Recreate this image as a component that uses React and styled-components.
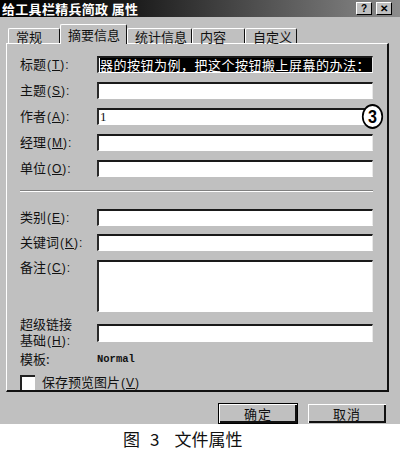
import React from "react";
import styled, { createGlobalStyle } from "styled-components";

const GlobalStyle = createGlobalStyle`
  html, body {
    margin: 0;
    padding: 0;
    background: #fff;
  }
  body {
    width: 400px;
    height: 453px;
    overflow: hidden;
    font-family: "Noto Sans CJK SC", "Liberation Sans", sans-serif;
    color: #111;
  }
`;

const Window = styled.div`
  height: 424px;
  background: #c0c0c0;
  display: flex;
  flex-direction: column;
`;

const TitleBar = styled.div`
  height: 17px;
  flex-shrink: 0;
  display: flex;
  align-items: center;
  justify-content: space-between;
  padding: 0 8px 0 2px;
  background: linear-gradient(to right, #000 0%, #1e1e1e 35%, #8c8c8c 100%);
`;

const TitleText = styled.span`
  color: #fff;
  font-size: 13px;
  font-weight: bold;
  line-height: 17px;
  letter-spacing: 0.3px;
`;

const TitleButtons = styled.div`
  display: flex;
  gap: 4px;
`;

const CapButton = styled.div`
  width: 16px;
  height: 13px;
  box-sizing: border-box;
  background: #c0c0c0;
  border-top: 1px solid #fff;
  border-left: 1px solid #fff;
  border-right: 1px solid #000;
  border-bottom: 1px solid #000;
  display: flex;
  align-items: center;
  justify-content: center;
  font: bold 10px "Liberation Sans", sans-serif;
  color: #000;
`;

const Body = styled.div`
  padding: 5px 11px 0 6px;
  display: flex;
  flex-direction: column;
`;

const Tabs = styled.div`
  height: 21px;
  display: flex;
  align-items: flex-end;
  padding-left: 2px;
`;

const Tab = styled.div`
  width: ${(p) => p.$w}px;
  height: ${(p) => (p.$active ? 20 : 15)}px;
  box-sizing: border-box;
  margin-bottom: ${(p) => (p.$active ? -1 : 0)}px;
  padding: ${(p) => (p.$active ? 3 : 1)}px 0 0 7px;
  background: #c0c0c0;
  border-top: 1px solid #fff;
  border-left: 1px solid #fff;
  border-right: 1px solid #111;
  border-radius: 2px 2px 0 0;
  font-size: 13px;
  line-height: 13px;
  white-space: nowrap;
  position: relative;
  z-index: ${(p) => (p.$active ? 1 : 0)};
`;

const Panel = styled.div`
  height: 349px;
  box-sizing: border-box;
  border-top: 1px solid #fff;
  border-left: 1px solid #fff;
  border-right: 2px solid #111;
  border-bottom: 2px solid #111;
  padding: 12px 14px 0 13px;
  display: flex;
  flex-direction: column;
`;

const Row = styled.div`
  display: flex;
  align-items: ${(p) => (p.$top ? "flex-start" : "center")};
  margin-top: ${(p) => p.$mt || 0}px;
`;

const Label = styled.div`
  width: 77px;
  flex-shrink: 0;
  font-size: 13px;
  line-height: ${(p) => (p.$multi ? 16 : 13)}px;
  white-space: nowrap;
`;

const Key = styled.span`
  font-family: "Liberation Sans", sans-serif;
  font-size: 12px;
  letter-spacing: 1px;
  margin-left: 1px;
`;

const U = styled.span`
  text-decoration: underline;
`;

const Input = styled.div`
  flex: 1;
  height: ${(p) => p.$h || 17}px;
  box-sizing: border-box;
  background: #fff;
  border-top: 2px solid #1a1a1a;
  border-left: 2px solid #2a2a2a;
  border-right: 1px solid #e8e8e8;
  border-bottom: 1px solid #fff;
  padding-left: 1px;
  display: flex;
  align-items: center;
  position: relative;
  font-size: 13px;
  line-height: 14px;
  white-space: nowrap;
`;

const Selected = styled.span`
  background: #000;
  color: #fff;
  letter-spacing: 0.5px;
  padding-right: 2px;
`;

const Plain = styled.span`
  font-family: "Liberation Serif", serif;
  font-size: 13px;
`;

const Badge = styled.div`
  position: absolute;
  right: -13px;
  top: -6px;
  width: 25px;
  height: 25px;
  box-sizing: border-box;
  border: 2px solid #000;
  border-radius: 50%;
  background: #fff;
  display: flex;
  align-items: center;
  justify-content: center;
  font: bold 19px "Liberation Sans", sans-serif;
  color: #000;
  transform: scaleX(0.85);
`;

const Separator = styled.div`
  height: 2px;
  box-sizing: border-box;
  border-top: 1px solid #808080;
  border-bottom: 1px solid #fff;
  margin-top: ${(p) => p.$mt || 0}px;
`;

const Value = styled.span`
  font: bold 10.5px "Liberation Mono", monospace;
`;

const CheckBox = styled.div`
  width: 15px;
  height: 15px;
  box-sizing: border-box;
  background: #fff;
  border-top: 2px solid #222;
  border-left: 2px solid #222;
  margin-right: 7px;
`;

const CheckLabel = styled.span`
  font-size: 13px;
  line-height: 13px;
`;

const ButtonRow = styled.div`
  display: flex;
  justify-content: flex-end;
  gap: 9px;
  padding-right: 2px;
  margin-top: 11px;
`;

const DlgButton = styled.div`
  width: 80px;
  height: 21px;
  box-sizing: border-box;
  background: #c0c0c0;
  border: 1px solid ${(p) => (p.$default ? "#000" : "transparent")};
  box-shadow: inset 1px 1px #fff, inset -2px -2px #111;
  display: flex;
  align-items: center;
  justify-content: center;
  font-size: 13px;
  line-height: 13px;
  letter-spacing: 1px;
`;

const Caption = styled.div`
  height: 29px;
  display: flex;
  align-items: center;
  padding-left: 123px;
  font-size: 17px;
  line-height: 17px;
  color: #111;
`;

const CaptionPart = styled.span`
  margin-right: ${(p) => p.$gap || 0}px;
`;

const tabs = [
  { name: "常规", w: 52 },
  { name: "摘要信息", w: 67, active: true },
  { name: "统计信息", w: 65 },
  { name: "内容", w: 53 },
  { name: "自定义", w: 52 },
];

const Lbl = ({ text, k }) => (
  <Label>
    {text}
    {k && (
      <Key>
        (<U>{k}</U>):
      </Key>
    )}
  </Label>
);

export default function App() {
  return (
    <>
      <GlobalStyle />
      <Window>
        <TitleBar>
          <TitleText>给工具栏精兵简政 属性</TitleText>
          <TitleButtons>
            <CapButton>?</CapButton>
            <CapButton>✕</CapButton>
          </TitleButtons>
        </TitleBar>
        <Body>
          <Tabs>
            {tabs.map((t) => (
              <Tab key={t.name} $w={t.w} $active={t.active}>
                {t.name}
              </Tab>
            ))}
          </Tabs>
          <Panel>
            <Row>
              <Lbl text="标题" k="T" />
              <Input>
                <Selected>器的按钮为例，把这个按钮搬上屏幕的办法：</Selected>
              </Input>
            </Row>
            <Row $mt={9}>
              <Lbl text="主题" k="S" />
              <Input />
            </Row>
            <Row $mt={9}>
              <Lbl text="作者" k="A" />
              <Input>
                <Plain>1</Plain>
                <Badge>3</Badge>
              </Input>
            </Row>
            <Row $mt={9}>
              <Lbl text="经理" k="M" />
              <Input />
            </Row>
            <Row $mt={9}>
              <Lbl text="单位" k="O" />
              <Input />
            </Row>
            <Separator $mt={13} />
            <Row $mt={17}>
              <Lbl text="类别" k="E" />
              <Input />
            </Row>
            <Row $mt={8}>
              <Lbl text="关键词" k="K" />
              <Input />
            </Row>
            <Row $mt={9} $top>
              <Lbl text="备注" k="C" />
              <Input $h={52} />
            </Row>
            <Row $mt={4}>
              <Label $multi>
                超级链接
                <br />
                基础
                <Key>
                  (<U>H</U>):
                </Key>
              </Label>
              <Input $h={18} />
            </Row>
            <Row $mt={3}>
              <Lbl text="模板:" />
              <Value>Normal</Value>
            </Row>
            <Row $mt={10}>
              <CheckBox />
              <CheckLabel>
                保存预览图片
                <Key>
                  (<U>V</U>)
                </Key>
              </CheckLabel>
            </Row>
          </Panel>
          <ButtonRow>
            <DlgButton $default>确定</DlgButton>
            <DlgButton>取消</DlgButton>
          </ButtonRow>
        </Body>
      </Window>
      <Caption>
        <CaptionPart $gap={10}>图</CaptionPart>
        <CaptionPart $gap={15}>3</CaptionPart>
        <CaptionPart>文件属性</CaptionPart>
      </Caption>
    </>
  );
}
